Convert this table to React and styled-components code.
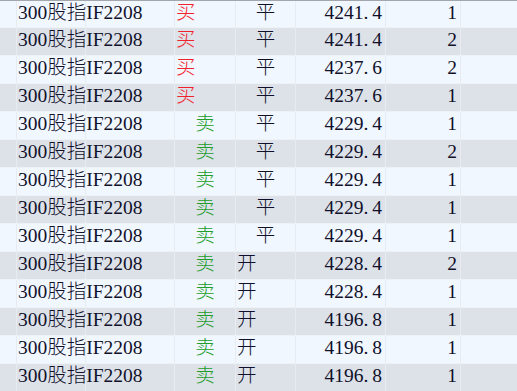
import React from "react";
import styled, { createGlobalStyle } from "styled-components";

const GlobalStyle = createGlobalStyle`
  html, body {
    margin: 0;
    padding: 0;
    background: #f0f7ff;
    overflow: hidden;
  }
`;

const Table = styled.div`
  width: 517px;
  height: 391px;
  overflow: hidden;
  border-top: 1px solid #a3a7ad;
  box-sizing: border-box;
  font-family: "Liberation Serif", "Noto Sans CJK SC", serif;
  font-size: 19.5px;
  font-weight: 300;
  line-height: 22px;
  color: #10102a;
`;

const Row = styled.div`
  display: grid;
  grid-template-columns: 17px 69px 89px 61px 60px 90px 75px 1fr;
  height: 28px;
  box-sizing: border-box;
  border-bottom: 1px solid #eef1f5;
  background: ${p => (p.$odd ? "#dde2e9" : "#f0f7ff")};

  &:first-child {
    height: 27px;
  }
`;

const Cell = styled.div`
  display: flex;
  align-items: center;
  justify-content: ${p =>
    p.$align === "right" ? "flex-end" : p.$align === "center" ? "center" : "flex-start"};
  padding: 0 ${p => (p.$align === "right" ? "3px" : "0")} 3px ${p =>
    p.$align === "left" ? "1px" : "0"};
  border-right: ${p => (p.$noLine ? "none" : "1px solid #e8ecf1")};
  white-space: nowrap;
  color: ${p => p.$color || "inherit"};
  position: relative;
  z-index: ${p => (p.$over ? 1 : 0)};
`;

const Dot = styled.span`
  margin-right: 4px;
`;

const rows = [
  ["买", "平", "4241.4", "1"],
  ["买", "平", "4241.4", "2"],
  ["买", "平", "4237.6", "2"],
  ["买", "平", "4237.6", "1"],
  ["卖", "平", "4229.4", "1"],
  ["卖", "平", "4229.4", "2"],
  ["卖", "平", "4229.4", "1"],
  ["卖", "平", "4229.4", "1"],
  ["卖", "平", "4229.4", "1"],
  ["卖", "开", "4228.4", "2"],
  ["卖", "开", "4228.4", "1"],
  ["卖", "开", "4196.8", "1"],
  ["卖", "开", "4196.8", "1"],
  ["卖", "开", "4196.8", "1"],
];

export default function App() {
  return (
    <>
      <GlobalStyle />
      <Table>
        {rows.map(([side, kind, price, qty], i) => {
          const [whole, frac] = price.split(".");
          return (
            <Row key={i} $odd={i % 2 === 1}>
              <Cell />
              <Cell $align="left" $over>
                300股指IF2208
              </Cell>
              <Cell />
              <Cell
                $align={side === "买" ? "left" : "center"}
                $color={side === "买" ? "#f2222a" : "#229c2a"}
              >
                {side}
              </Cell>
              <Cell $align={kind === "平" ? "center" : "left"}>{kind}</Cell>
              <Cell $align="right">
                {whole}
                <Dot>.</Dot>
                {frac}
              </Cell>
              <Cell $align="right">{qty}</Cell>
              <Cell $noLine />
            </Row>
          );
        })}
      </Table>
    </>
  );
}
